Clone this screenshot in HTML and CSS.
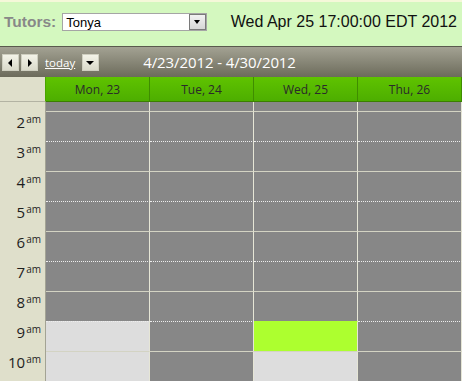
FILE: index.html
```html
<!DOCTYPE html>
<html lang="en">
  <head>
    <meta charset="UTF-8" />
    <meta name="viewport" content="width=device-width, initial-scale=1.0" />
    <title>Tutors</title>
    <link rel="stylesheet" href="styles.css">
  </head>
  <body>
    <div class="top">
      <div class="tutors">
        <span class="tutors__label">Tutors:</span>
        <div class="select">
          <span class="select__value">Tonya</span>
          <span class="select__btn"></span>
        </div>
      </div>
      <div class="now">Wed Apr 25 17:00:00 EDT 2012</div>
    </div>

    <div class="toolbar">
      <button class="tb-btn tb-btn_prev" type="button"></button>
      <button class="tb-btn tb-btn_next" type="button"></button>
      <a href="#" class="today">today</a>
      <button class="tb-btn tb-btn_menu" type="button"></button>
      <span class="range">4/23/2012 - 4/30/2012</span>
    </div>

    <div class="cal">
      <div class="cal__head">
        <div class="cal__corner"></div>
        <div class="cal__day">Mon, 23</div>
        <div class="cal__day">Tue, 24</div>
        <div class="cal__day">Wed, 25</div>
        <div class="cal__day">Thu, 26</div>
      </div>

      <!-- 1am is scrolled away, only its bottom shows -->
      <div class="row row_first">
        <div class="row__time"></div>
        <div class="cell"></div><div class="cell"></div><div class="cell"></div><div class="cell"></div>
      </div>
      <div class="row">
        <div class="row__time">2<sup>am</sup></div>
        <div class="cell"></div><div class="cell"></div><div class="cell"></div><div class="cell"></div>
      </div>
      <div class="row row_half">
        <div class="row__time">3<sup>am</sup></div>
        <div class="cell"></div><div class="cell"></div><div class="cell"></div><div class="cell"></div>
      </div>
      <div class="row">
        <div class="row__time">4<sup>am</sup></div>
        <div class="cell"></div><div class="cell"></div><div class="cell"></div><div class="cell"></div>
      </div>
      <div class="row row_half">
        <div class="row__time">5<sup>am</sup></div>
        <div class="cell"></div><div class="cell"></div><div class="cell"></div><div class="cell"></div>
      </div>
      <div class="row">
        <div class="row__time">6<sup>am</sup></div>
        <div class="cell"></div><div class="cell"></div><div class="cell"></div><div class="cell"></div>
      </div>
      <div class="row row_half">
        <div class="row__time">7<sup>am</sup></div>
        <div class="cell"></div><div class="cell"></div><div class="cell"></div><div class="cell"></div>
      </div>
      <div class="row">
        <div class="row__time">8<sup>am</sup></div>
        <div class="cell"></div><div class="cell"></div><div class="cell"></div><div class="cell"></div>
      </div>
      <div class="row row_half">
        <div class="row__time">9<sup>am</sup></div>
        <div class="cell cell_free"></div><div class="cell"></div><div class="cell cell_now"></div><div class="cell"></div>
      </div>
      <div class="row">
        <div class="row__time">10<sup>am</sup></div>
        <div class="cell cell_free"></div><div class="cell"></div><div class="cell cell_free"></div><div class="cell"></div>
      </div>
    </div>
  </body>
</html>
```

FILE: styles.css
```css
* {
  box-sizing: border-box;
}
body {
  margin: 0;
  width: 462px;
  height: 381px;
  overflow: hidden;
  font-family: 'Open Sans', sans-serif;
  background: #dfdfcb;
}

/* top bar */
.top {
  height: 46px;
  border-top: 2px solid #f5f8d9;
  background: #d4f8bf;
  display: flex;
  align-items: center;
  justify-content: space-between;
  padding: 0 5px 4px 4px;
}
.tutors {
  display: flex;
  align-items: center;
}
.tutors__label {
  font: bold 15.5px 'Liberation Sans', Arial, sans-serif;
  color: #888;
  margin-right: 6px;
}
.select {
  width: 145px;
  height: 18px;
  border: 1px solid #a5a5a5;
  background: #fff;
  display: flex;
  align-items: center;
  justify-content: space-between;
}
.select__value {
  font: 13px 'Liberation Sans', Arial, sans-serif;
  color: #000;
  padding-left: 3px;
}
.select__btn {
  position: relative;
  width: 17px;
  height: 16px;
  border: 1px solid #7a7a7a;
  background: linear-gradient(#f2f2f2, #d6d6d6);
}
.select__btn::before {
  content: '';
  position: absolute;
  left: 4px;
  top: 5px;
  border-top: 4px solid #000;
  border-left: 3.5px solid transparent;
  border-right: 3.5px solid transparent;
}
.now {
  font: 16px 'Liberation Sans', Arial, sans-serif;
  color: #111;
}

/* toolbar */
.toolbar {
  height: 31px;
  border-top: 1px solid #5a5a4e;
  background: linear-gradient(#a3a293, #6c6b5b);
  display: flex;
  align-items: center;
  padding-left: 2px;
}
.tb-btn {
  position: relative;
  width: 17px;
  height: 17px;
  padding: 0;
  margin-right: 2px;
  border: 1px solid #cfcfc0;
  background: linear-gradient(#f3f3e8, #dadaca);
}
.tb-btn::before {
  content: '';
  position: absolute;
  top: 4px;
  left: 5px;
  border-top: 4px solid transparent;
  border-bottom: 4px solid transparent;
}
.tb-btn_prev::before {
  border-right: 4px solid #000;
}
.tb-btn_next::before {
  left: 6px;
  border-left: 4px solid #000;
}
.tb-btn_menu::before {
  top: 6px;
  left: 3px;
  border: 4px solid transparent;
  border-top: 4px solid #000;
  border-bottom: 0;
}
.today {
  color: #fff;
  font-size: 11.5px;
  margin: 0 7px 0 5px;
}
.range {
  color: #fff;
  font-size: 15px;
  letter-spacing: -0.1px;
  margin-left: 42px;
}

/* calendar */
.cal__head,
.row {
  display: grid;
  grid-template-columns: 46px repeat(4, 104px);
}
.cal__head {
  height: 25px;
}
.cal__corner {
  background: #dfdfcb;
  border-right: 1px solid #4aa400;
  border-bottom: 1px solid #b3b3a3;
}
.cal__day {
  display: flex;
  align-items: center;
  justify-content: center;
  background: linear-gradient(#5fc300, #4dae00);
  border-right: 1px solid #3f8d00;
  border-bottom: 1px solid #3a7f00;
  color: #2a2a2a;
  font-size: 12px;
}
.row {
  height: 30px;
}
.row_first {
  height: 9px;
}
.row__time {
  border-right: 1px solid #a3a394;
  text-align: right;
  padding: 0 4px 0 0;
  font-size: 15px;
  line-height: 16px;
  color: #1e1e1e;
}
.row__time sup {
  font-size: 10px;
  vertical-align: 5px;
  margin-left: 1px;
}
.cell {
  background: #878787;
  border-right: 1px solid #e6e6d6;
  border-top: 1px solid #d3d3c3;
}
.row_half .cell {
  border-top: 1px dotted #eeeeee;
}
.row_first .cell {
  border-top: 0;
}
.cell_free {
  background: #dddddd;
}
.row_half .cell_now {
  background: #adff2f;
  border-top-color: #adff2f;
}
```
